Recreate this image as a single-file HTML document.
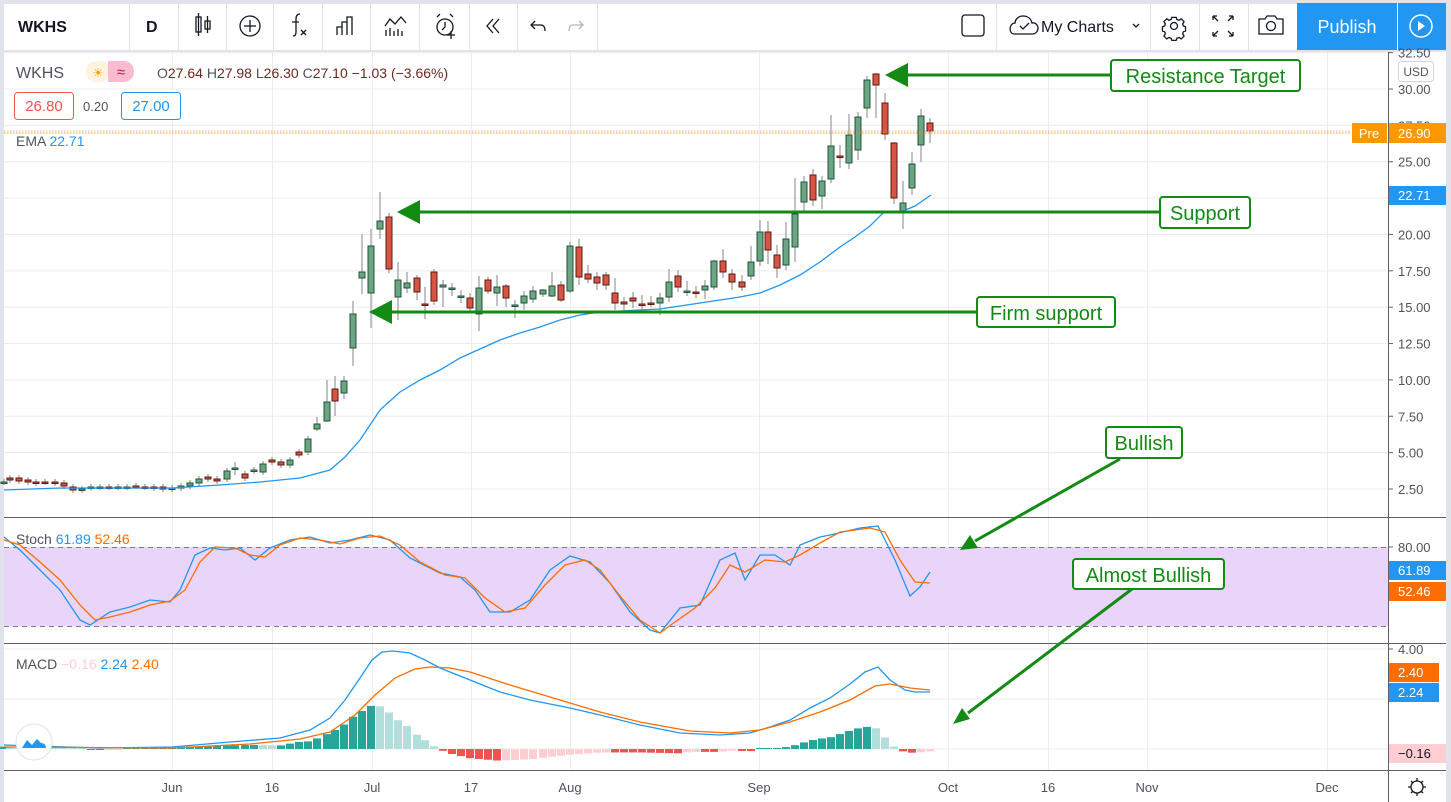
<!DOCTYPE html>
<html><head><meta charset="utf-8"><style>
html,body{margin:0;padding:0;background:#e0e3eb;}
body{width:1451px;height:802px;overflow:hidden;position:relative;font-family:"Liberation Sans",sans-serif;}
svg{position:absolute;left:0;top:0;}
</style></head><body>
<svg id="s" width="1451" height="802" xmlns="http://www.w3.org/2000/svg" font-family="Liberation Sans, sans-serif">
<rect x="0" y="0" width="1451" height="802" fill="#e0e3eb"/>
<rect x="4" y="4" width="1442" height="46" fill="#fff"/>
<rect x="4" y="52" width="1442" height="750" fill="#fff"/>
<g id="grid" stroke="#ececef" stroke-width="1"></g>
<g stroke="#e0e3eb" stroke-width="1">
<line x1="129.5" y1="4" x2="129.5" y2="50"/><line x1="178.5" y1="4" x2="178.5" y2="50"/>
<line x1="226.5" y1="4" x2="226.5" y2="50"/><line x1="273.5" y1="4" x2="273.5" y2="50"/>
<line x1="322.5" y1="4" x2="322.5" y2="50"/><line x1="370.5" y1="4" x2="370.5" y2="50"/>
<line x1="419.5" y1="4" x2="419.5" y2="50"/><line x1="469.5" y1="4" x2="469.5" y2="50"/>
<line x1="517.5" y1="4" x2="517.5" y2="50"/><line x1="597.5" y1="4" x2="597.5" y2="50"/>
<line x1="996.5" y1="4" x2="996.5" y2="50"/><line x1="1150.5" y1="4" x2="1150.5" y2="50"/>
<line x1="1199.5" y1="4" x2="1199.5" y2="50"/><line x1="1248.5" y1="4" x2="1248.5" y2="50"/>
</g>
<text x="18" y="32" font-size="16" font-weight="bold" fill="#131722">WKHS</text>
<text x="146" y="32" font-size="16" font-weight="bold" fill="#131722">D</text>
<g fill="none" stroke="#131722" stroke-width="1.3">
<rect x="196" y="17" width="5" height="15"/><line x1="198.5" y1="13" x2="198.5" y2="36"/>
<rect x="205" y="21" width="5" height="8"/><line x1="207.5" y1="16" x2="207.5" y2="33"/>
<circle cx="250" cy="26" r="10"/><line x1="250" y1="20" x2="250" y2="32"/><line x1="244" y1="26" x2="256" y2="26"/>
<path d="M300 14c-3 0-4 2-4 5v13c0 3-1 4-3 4M292 22h7"/><path d="M301 30l5 5M306 30l-5 5"/>
<path d="M337 35v-8h5v8M342 35v-13h5v13M347 35v-18h5v18"/>
<path d="M385 26l5-7 5 5 6-7 5 6M386 30v6M390 28v8M394 31v5M398 29v7M402 31v5"/>
<circle cx="445" cy="27" r="8"/><path d="M445 22v5l-3 3M437 17l3-3M453 17l-3-3M451 31v8M447 35h8"/>
<path d="M493 19l-6 7 6 7M499 19l-6 7 6 7"/>
<path d="M535 21l-4 4 4 4M531 25h10c3 0 4 3 4 6"/>
</g>
<path d="M579 21l4 4-4 4M583 25h-10c-3 0-4 3-4 6" fill="none" stroke="#b2b5be" stroke-width="1.3"/>
<g fill="none" stroke="#131722" stroke-width="1.3">
<rect x="962" y="15" width="22" height="21" rx="3"/>
<path d="M1014 34h18c4 0 6-3 6-6 0-3-3-6-6-5-1-4-4-7-9-7-5 0-8 4-8 7-3 0-5 3-5 6 0 3 2 5 4 5z"/>
<path d="M1020 26l3 3 6-6"/>
<path d="M1133 24l3 3 3-3"/>
<circle cx="1174" cy="26" r="3.5"/>
<g transform="translate(1174 26) scale(0.72) translate(-1174 -26)">
<path d="M1171 14h6l1 3 3 1 3-2 4 4-2 3 1 3 3 1v6l-3 1-1 3 2 3-4 4-3-2-3 1-1 3h-6l-1-3-3-1-3 2-4-4 2-3-1-3-3-1v-6l3-1 1-3-2-3 4-4 3 2 3-1z" stroke-width="1.8"/>
</g>
<path d="M1213 16l5 5M1213 16v4M1213 16h4M1233 16l-5 5M1233 16v4M1233 16h-4M1213 36l5-5M1213 36v-4M1213 36h4M1233 36l-5-5M1233 36v-4M1233 36h-4"/>
<path d="M1259 19h6l2-3h8l2 3h6v15h-24z"/><circle cx="1271" cy="26" r="4.5"/>
</g>
<text x="1041" y="32" font-size="16" fill="#131722">My Charts</text>
<rect x="1297" y="3" width="100" height="47" fill="#2196f3"/>
<rect x="1398" y="3" width="48" height="47" fill="#2196f3"/>
<text x="1347" y="33" font-size="18" fill="#fff" text-anchor="middle">Publish</text>
<circle cx="1421" cy="26" r="11" fill="none" stroke="#fff" stroke-width="1.5"/>
<path d="M1418 21v10l7-5z" fill="#fff"/>

<line x1="4" y1="517.5" x2="1446" y2="517.5" stroke="#5d606b"/>
<line x1="4" y1="643.5" x2="1446" y2="643.5" stroke="#5d606b"/>
<line x1="4" y1="770.5" x2="1446" y2="770.5" stroke="#5d606b"/>
<line x1="1388.5" y1="52" x2="1388.5" y2="802" stroke="#5d606b"/>

<rect x="4" y="547" width="1384" height="79" fill="#e9d5fa"/>
<line x1="4" y1="547.5" x2="1388" y2="547.5" stroke="#787b86" stroke-dasharray="5,4"/>
<line x1="4" y1="626.5" x2="1388" y2="626.5" stroke="#787b86" stroke-dasharray="5,4"/>

<g id="candles"></g>
<polyline id="ema" fill="none" stroke="#2196f3" stroke-width="1.3"/>
<g id="hist"></g>
<polyline id="mb" fill="none" stroke="#2196f3" stroke-width="1.3"/>
<polyline id="mo" fill="none" stroke="#ff6d00" stroke-width="1.3"/>
<polyline id="sb" fill="none" stroke="#2196f3" stroke-width="1.3"/>
<polyline id="so" fill="none" stroke="#ff6d00" stroke-width="1.3"/>

<line x1="4" y1="133" x2="1350" y2="133" stroke="#ff9800" stroke-dasharray="1.5,1.5"/>
<line x1="4" y1="131" x2="1350" y2="131" stroke="#f57c6a" stroke-dasharray="1.5,1.5" opacity="0.6"/>

<text x="16" y="78" font-size="16" fill="#50535e">WKHS</text>
<rect x="86" y="61" width="24" height="21" rx="10" fill="#fff3e0"/>
<rect x="108" y="61" width="26" height="21" rx="10" fill="#f8bbd0"/>
<rect x="108" y="61" width="10" height="21" fill="#f8bbd0"/>
<text x="98" y="77" font-size="12" fill="#ff9800" text-anchor="middle">☀</text>
<text x="121" y="77" font-size="15" fill="#c2185b" text-anchor="middle">≈</text>
<text x="157" y="78" font-size="14" fill="#50535e">O<tspan fill="#6b2a20">27.64</tspan> H<tspan fill="#6b2a20">27.98</tspan> L<tspan fill="#6b2a20">26.30</tspan> C<tspan fill="#6b2a20">27.10</tspan> <tspan fill="#6b2a20">−1.03 (−3.66%)</tspan></text>
<rect x="14.5" y="92.5" width="59" height="27" rx="3" fill="#fff" stroke="#ef5350"/>
<text x="44" y="111" font-size="15" fill="#ef5350" text-anchor="middle">26.80</text>
<text x="83" y="111" font-size="13" fill="#50535e">0.20</text>
<rect x="121.5" y="92.5" width="59" height="27" rx="3" fill="#fff" stroke="#2196f3"/>
<text x="151" y="111" font-size="15" fill="#2196f3" text-anchor="middle">27.00</text>
<text x="16" y="146" font-size="14" fill="#50535e">EMA <tspan fill="#2196f3">22.71</tspan></text>
<text x="16" y="544" font-size="14" fill="#50535e">Stoch <tspan fill="#2196f3">61.89</tspan> <tspan fill="#ff6d00">52.46</tspan></text>
<text x="16" y="669" font-size="14" fill="#50535e">MACD <tspan fill="#ffcdd2">−0.16</tspan> <tspan fill="#2196f3">2.24</tspan> <tspan fill="#ff6d00">2.40</tspan></text>

<circle cx="34" cy="742" r="18" fill="#fff" stroke="#e0e3eb" stroke-width="1"/>
<path d="M22 748l5-8 5 5 5-6 4 4c3 0 5 2 5 5z" fill="#2196f3"/>

<g id="axis" font-size="13" fill="#50535e"></g>
<rect x="1398.5" y="61.5" width="35" height="20" rx="3" fill="#fff" stroke="#d1d4dc"/>
<text x="1416" y="76" font-size="12" fill="#50535e" text-anchor="middle">USD</text>
<rect x="1352" y="123" width="35" height="20" fill="#ff9800"/>
<text x="1369" y="138" font-size="13" fill="#fff" text-anchor="middle">Pre</text>
<rect x="1389" y="123" width="57" height="20" fill="#ff9800"/>
<text x="1398" y="138" font-size="13" fill="#fff">26.90</text>
<rect x="1389" y="186" width="57" height="19" fill="#2196f3"/>
<text x="1398" y="200" font-size="13" fill="#fff">22.71</text>
<rect x="1389" y="561" width="57" height="19" fill="#2196f3"/>
<text x="1398" y="575" font-size="13" fill="#fff">61.89</text>
<rect x="1389" y="582" width="57" height="19" fill="#ff6d00"/>
<text x="1398" y="596" font-size="13" fill="#fff">52.46</text>
<rect x="1389" y="663" width="50" height="19" fill="#ff6d00"/>
<text x="1398" y="677" font-size="13" fill="#fff">2.40</text>
<rect x="1389" y="683" width="50" height="19" fill="#2196f3"/>
<text x="1398" y="697" font-size="13" fill="#fff">2.24</text>
<rect x="1389" y="744" width="57" height="19" fill="#ffcdd2"/>
<text x="1398" y="758" font-size="13" fill="#131722">−0.16</text>
<circle cx="1417" cy="787" r="6" fill="none" stroke="#131722" stroke-width="1.3"/>
<path d="M1417 778v3M1417 793v3M1408 787h3M1423 787h3M1411 781l2 2M1421 791l2 2M1423 781l-2 2M1413 791l-2 2" stroke="#131722" stroke-width="1.3"/>

<g font-size="13" fill="#50535e" text-anchor="middle">
<text x="172" y="792">Jun</text><text x="272" y="792">16</text><text x="372" y="792">Jul</text>
<text x="471" y="792">17</text><text x="570" y="792">Aug</text><text x="759" y="792">Sep</text>
<text x="948" y="792">Oct</text><text x="1048" y="792">16</text><text x="1147" y="792">Nov</text><text x="1327" y="792">Dec</text>
</g>

<g stroke="#138a13" stroke-width="3" fill="none">
<line x1="905" y1="75" x2="1112" y2="75"/>
<line x1="418" y1="212" x2="1160" y2="212"/>
<line x1="390" y1="312" x2="977" y2="312"/>
<line x1="1120" y1="459" x2="975" y2="541"/>
<line x1="1132" y1="589" x2="968" y2="713"/>
</g>
<g fill="#138a13">
<path d="M885 75l23-12v24z"/>
<path d="M397 212l23-12v24z"/>
<path d="M369 312l23-12v24z"/>
<path d="M960 550l10-15 8 13z"/>
<path d="M953 724l9-16 8 11z"/>
</g>
<g fill="#fff" stroke="#138a13" stroke-width="2">
<rect x="1111" y="60" width="189" height="31" rx="3"/>
<rect x="1160" y="197" width="90" height="31" rx="3"/>
<rect x="977" y="297" width="138" height="30" rx="3"/>
<rect x="1106" y="427" width="76" height="31" rx="3"/>
<rect x="1073" y="559" width="151" height="30" rx="3"/>
</g>
<g fill="#138a13" font-size="20" text-anchor="middle">
<text x="1205.5" y="83">Resistance Target</text>
<text x="1205" y="220">Support</text>
<text x="1046" y="320">Firm support</text>
<text x="1144" y="450">Bullish</text>
<text x="1148.5" y="582">Almost Bullish</text>
</g>
</svg>
<script>
var NS="http://www.w3.org/2000/svg";
function el(t,a,p){var e=document.createElementNS(NS,t);for(var k in a)e.setAttribute(k,a[k]);(p||document.getElementById('s')).appendChild(e);return e;}
var g=document.getElementById('grid');
[172,272,372,471,570,759,948,1048,1147,1327].forEach(function(x){el('line',{x1:x+.5,y1:52,x2:x+.5,y2:770},g);});
for(var p=2.5;p<=32.5;p+=2.5){var y=89+(30-p)*14.545;el('line',{x1:4,y1:y,x2:1388,y2:y},g);}
[570,598].forEach(function(y){el('line',{x1:4,y1:y,x2:1388,y2:y},g);});
[649,699,749].forEach(function(y){el('line',{x1:4,y1:y,x2:1388,y2:y},g);});
var ax=document.getElementById('axis');
var labs=[[32.5,"32.50"],[30,"30.00"],[27.5,"27.50"],[25,"25.00"],[20,"20.00"],[17.5,"17.50"],[15,"15.00"],[12.5,"12.50"],[10,"10.00"],[7.5,"7.50"],[5,"5.00"],[2.5,"2.50"]];
labs.forEach(function(l){var y=89+(30-l[0])*14.545;var t=el('text',{x:1398,y:y+5},ax);t.textContent=l[1];el('line',{x1:1388,y1:y,x2:1393,y2:y,stroke:'#5d606b'},ax);});
[[547,"80.00"],[649,"4.00"]].forEach(function(l){var t=el('text',{x:1398,y:l[0]+5},ax);t.textContent=l[1];el('line',{x1:1388,y1:l[0],x2:1393,y2:l[0],stroke:'#5d606b'},ax);});
var C=[[4,482,482,'g'],[10,478,480,'r'],[19,478,481,'r'],[28,480,482,'r'],[36,482,483,'r'],[45,482,482,'r'],[55,482,483,'r'],[64,483,486,'r'],[73,487,490,'r'],[82,489,490,'g'],[91,487,488,'g'],[100,487,487,'g'],[109,487,487,'r'],[118,487,487,'g'],[127,487,487,'g'],[136,486,486,'r'],[145,487,487,'r'],[154,487,488,'r'],[163,487,489,'r'],[172,488,489,'g'],[181,486,488,'g'],[190,483,486,'g'],[199,479,483,'g'],[208,477,479,'r'],[217,479,481,'r'],[227,471,479,'g'],[235,468,468,'g',462,475],[245,474,478,'r'],[254,470,471,'g'],[263,464,472,'g'],[272,460,462,'r'],[281,462,465,'r'],[290,460,465,'g'],[299,452,455,'r'],[308,439,452,'g'],[317,424,429,'g',417,431],[327,402,421,'g',380,422],[335,389,401,'r',376,416],[344,381,393,'g',376,399],[353,314,348,'g',301,366],[362,272,278,'g',234,294],[371,246,293,'g',229,328],[380,221,229,'g',192,239],[389,217,269,'r',213,273],[398,280,297,'g',262,320],[407,283,288,'g',272,293],[417,278,292,'r',275,300],[425,304,304,'r',287,319],[434,272,301,'r',269,305],[443,285,287,'g',280,307],[452,288,288,'g',283,296],[461,296,296,'g',290,303],[470,298,308,'r',293,313],[479,288,314,'g',276,331],[488,280,291,'r',277,294],[497,287,293,'g',275,306],[506,286,298,'r',284,307],[515,305,305,'g',300,318],[524,296,303,'g',291,310],[533,291,299,'g',286,303],[543,290,294,'g',289,297],[552,286,296,'g',272,297],[561,285,300,'r',281,302],[570,246,291,'g',242,293],[579,247,277,'r',239,285],[588,274,279,'r',265,283],[597,277,283,'r',272,290],[606,275,285,'r',272,290],[615,293,303,'r',278,310],[624,302,304,'r',297,310],[633,298,301,'r',292,308],[642,304,304,'r',295,310],[651,303,303,'r',296,307],[660,298,303,'g',293,315],[669,282,297,'g',269,302],[678,276,287,'r',270,292],[687,291,291,'g',281,296],[696,292,293,'r',286,298],[705,286,290,'g',280,299],[714,261,287,'g',260,290],[723,261,272,'r',249,278],[732,274,282,'r',269,290],[742,282,287,'r',275,291],[751,262,276,'g',246,280],[760,232,261,'g',220,266],[768,232,250,'r',221,264],[777,255,268,'r',245,278],[786,239,265,'g',222,270],[795,214,247,'g',178,262],[804,182,202,'g',176,213],[813,175,200,'r',169,206],[822,181,196,'g',176,209],[831,146,179,'g',115,183],[840,156,156,'r',145,168],[849,135,163,'g',114,169],[858,117,150,'g',112,160],[867,80,108,'g',76,118],[876,74,85,'r',73,118],[885,103,134,'r',93,140],[894,143,198,'r',142,204],[903,203,213,'g',181,229],[912,164,188,'g',152,195],[921,116,145,'g',109,162],[930,123,131,'r',118,143]];
var cg=document.getElementById('candles');
C.forEach(function(c){var x=c[0],t=c[1],b=c[2],hi=c[4]||t-3,lo=c[5]||b+3;
el('line',{x1:x,y1:hi,x2:x,y2:lo,stroke:'#999','stroke-width':1.2},cg);
var h=Math.max(b-t,1.5);var g2=c[3]=='g';
el('rect',{x:x-3,y:t,width:6,height:h,fill:g2?'#6ba583':'#d75442',stroke:g2?'#225437':'#5b1a13','stroke-width':1},cg);});
function pts(a){return a.map(function(p){return p[0]+','+p[1];}).join(' ');}
var ema=[[4,490],[60,488],[172,488],[220,485],[260,482],[300,478],[330,470],[345,457],[360,440],[380,410],[400,392],[420,380],[440,370],[460,358],[480,349],[500,340],[520,333],[540,327],[560,320],[580,315],[600,312],[620,311],[640,310],[660,309],[680,306],[700,303],[720,300],[740,297],[760,293],[780,285],[800,275],[820,262],[840,247],[855,237],[870,226],[883,213],[903,211],[915,206],[931,195]];
document.getElementById('ema').setAttribute('points',pts(ema));
var sb=[[4,537],[20,550],[40,570],[60,590],[80,620],[90,625],[110,612],[130,607],[150,600],[170,602],[180,590],[195,555],[210,548],[225,550],[240,548],[255,560],[270,548],[290,540],[310,537],[330,543],[350,540],[370,535],[390,540],[410,558],[440,573],[460,577],[475,590],[490,612],[510,612],[530,600],[550,570],[570,556],[590,562],[610,583],[630,612],[650,630],[660,633],[680,608],[700,605],[720,560],[735,553],[745,580],[760,555],[775,555],[790,565],[800,545],[820,537],[830,535],[860,528],[878,526],[895,560],[910,596],[920,587],[930,572]];
var so=[[4,540],[20,545],[40,562],[60,580],[80,605],[95,620],[110,617],[130,612],[150,605],[170,601],[185,590],[200,562],[215,547],[235,548],[250,555],[265,557],[280,545],[300,538],[320,540],[340,544],[360,538],[380,536],[400,545],[420,562],[445,575],[465,578],[485,598],[505,612],[525,608],[545,585],[565,565],[585,560],[600,570],[620,596],[640,620],[660,633],[675,622],[695,608],[715,588],[730,565],[745,572],[765,560],[785,562],[800,555],[820,543],[840,532],[870,528],[885,532],[900,560],[915,582],[930,583]];
document.getElementById('sb').setAttribute('points',pts(sb));
document.getElementById('so').setAttribute('points',pts(so));
var mb=[[4,745],[100,748],[172,747],[230,742],[280,738],[310,730],[330,718],[345,700],[360,678],[372,660],[382,652],[393,651],[410,653],[425,660],[440,668],[470,680],[500,692],[530,700],[570,708],[600,715],[640,725],[680,733],[720,735],[750,733],[770,727],[790,720],[810,708],[830,698],[850,684],[865,672],[878,667],[890,680],[905,690],[915,692],[930,692]];
var mo=[[4,747],[172,748],[250,744],[300,739],[330,732],[355,715],[375,695],[395,678],[415,669],[430,667],[450,668],[470,672],[510,685],[560,700],[600,712],[640,722],[690,731],[730,733],[760,730],[790,722],[820,712],[850,700],[875,686],[890,684],[910,688],[930,690]];
document.getElementById('mb').setAttribute('points',pts(mb));
document.getElementById('mo').setAttribute('points',pts(mo));
function interp(a,x){for(var i=0;i<a.length-1;i++){if(x>=a[i][0]&&x<=a[i+1][0]){var t=(x-a[i][0])/(a[i+1][0]-a[i][0]);return a[i][1]+t*(a[i+1][1]-a[i][1]);}}return a[a.length-1][1];}
var hg=document.getElementById('hist'),prev=0;
C.forEach(function(c){var x=c[0];var v=(interp(mo,x)-interp(mb,x))*1.15;var col;
if(v>=0)col=v>=prev?'#26a69a':'#b2dfdb';else col=v<=prev?'#ef5350':'#ffcdd2';prev=v;
var h=Math.max(Math.abs(v),1);el('rect',{x:x-4,y:v>=0?749-h:749,width:8,height:h,fill:col},hg);});
</script>
</body></html>
